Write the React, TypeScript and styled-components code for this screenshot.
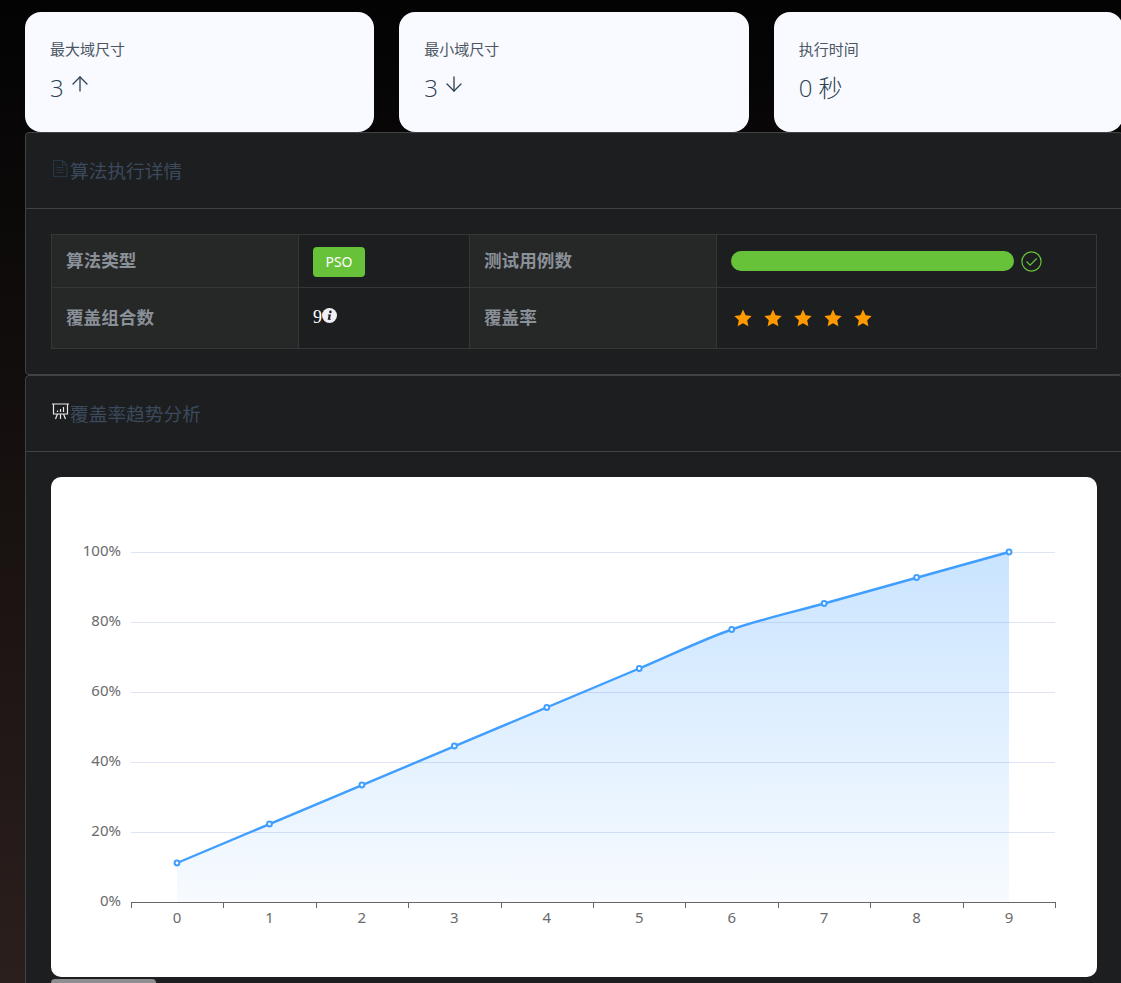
import React from "react";
import styled, { createGlobalStyle } from "styled-components";
import { ArrowUp, ArrowDown } from "lucide-react";

const FONT = `"Noto Sans", "Open Sans", "Noto Sans CJK SC", sans-serif`;

const Global = createGlobalStyle`
  html, body { margin: 0; padding: 0; height: 983px; overflow: hidden; }
  body {
    background: linear-gradient(180deg, #030303 0%, #2b1f1d 100%);
    font-family: ${FONT};
  }
`;

const Page = styled.div`
  width: 1098px;
  margin-left: 25px;
  padding-top: 12px;
`;

const StatRow = styled.div`
  display: grid;
  grid-template-columns: repeat(3, 1fr);
  gap: 25px;
`;

const StatCard = styled.div`
  height: 120px;
  box-sizing: border-box;
  background: #f8faff;
  border-radius: 16px;
  padding: 27px 25px 0;
`;

const StatLabel = styled.div`
  font-size: 15px;
  line-height: 20px;
  color: #4c5663;
`;

const StatValue = styled.div`
  display: flex;
  align-items: center;
  gap: 4px;
  margin-top: 13px;
  height: 32px;
  font-family: "Open Sans", "Noto Sans CJK SC", sans-serif;
  font-weight: 300;
  font-size: 24px;
  line-height: 32px;
  color: #2c3e50;
  svg { margin-top: -8px; }
`;

const Panel = styled.section`
  background: #1d1e20;
  border: 1px solid #414243;
  border-radius: 4px;
`;

const PanelHeader = styled.div`
  display: flex;
  align-items: center;
  box-sizing: border-box;
  height: 76px;
  padding: 0 25px 2px;
  border-bottom: 1px solid #414243;
  font-size: 18.72px;
  color: #3b4a5c;
`;

const PanelIcon = styled.svg`
  width: 19px;
  height: 19px;
  margin-top: -3px;
  flex: none;
`;

const PanelBody = styled.div`
  padding: 25px;
`;

const InfoTable = styled.div`
  display: grid;
  grid-template-columns: 247px 171px 247px 1fr;
  grid-template-rows: 53px 61px;
  border-top: 1px solid #363637;
  border-left: 1px solid #363637;
`;

const LabelCell = styled.div`
  display: flex;
  align-items: center;
  padding: 0 14px 3px;
  background: #262727;
  border-right: 1px solid #363637;
  border-bottom: 1px solid #363637;
  font-size: 17.6px;
  font-weight: 700;
  color: #8a9098;
`;

const ValueCell = styled.div`
  display: flex;
  align-items: center;
  padding: 0 14px;
  border-right: 1px solid #363637;
  border-bottom: 1px solid #363637;
  color: #fff;
  font-size: 16px;
`;

const Tag = styled.span`
  display: inline-flex;
  align-items: center;
  justify-content: center;
  width: 52px;
  height: 30px;
  margin-top: 1px;
  border-radius: 4px;
  background: #67c23a;
  color: #fff;
  font-size: 14px;
`;

const ProgressWrap = styled.div`
  display: flex;
  align-items: center;
  gap: 7px;
  width: 100%;
`;

const ProgressBar = styled.div`
  width: 283px;
  height: 20px;
  border-radius: 10px;
  background: #67c23a;
`;

const CountWrap = styled.span`
  display: inline-flex;
  align-items: center;
  margin-top: -2px;
  font-family: "Liberation Serif", serif;
  font-size: 18px;
`;

const Stars = styled.div`
  display: flex;
  gap: 10px;
  padding-left: 2px;
  margin-top: -1px;
`;

const ChartCard = styled.div`
  background: #fff;
  border-radius: 10px;
  height: 500px;
  overflow: hidden;
`;

const ScrollThumb = styled.div`
  width: 105px;
  height: 10px;
  margin-top: 2px;
  border-radius: 4px 4px 0 0;
  background: #8d8d92;
`;

const pts = [863, 824, 785, 746, 707.5, 668.5, 629.5, 603.5, 577.5, 552];
const X0 = 177 - 51;
const DX = 92.45;
const Y = (v: number) => v - 477;
const px = (i: number) => X0 + DX * i;
const linePath =
  `M${px(0)} ${Y(pts[0])}` +
  ` L${px(5)} ${Y(pts[5])}` +
  ` C${px(5) + 30} ${Y(pts[5]) - 12.6} ${px(6) - 30} ${Y(pts[6]) + 10.5} ${px(6)} ${Y(pts[6])}` +
  ` C${px(6) + 30} ${Y(pts[6]) - 10.5} ${px(7) - 30} ${Y(pts[7]) + 8.4} ${px(7)} ${Y(pts[7])}` +
  ` L${px(9)} ${Y(pts[9])}`;

const Star = () => (
  <svg width="20" height="20" viewBox="0 0 20 20">
    <path fill="#ff9900" d="M10 1.6l2.6 5.6 6.1.8-4.5 4.2 1.2 6.1L10 15.3l-5.4 3 1.2-6.1L1.3 8l6.1-.8z" />
  </svg>
);

const Chart = () => {
  const grid = [0, 20, 40, 60, 80, 100];
  return (
    <svg width="1046" height="500" viewBox="0 0 1046 500" style={{ display: "block" }}>
      <defs>
        <linearGradient id="area" x1="0" y1="0" x2="0" y2="1">
          <stop offset="0" stopColor="#409eff" stopOpacity="0.28" />
          <stop offset="1" stopColor="#409eff" stopOpacity="0.04" />
        </linearGradient>
      </defs>
      {grid.slice(1).map((g) => {
        const y = Math.round(Y(902 - g * 3.5)) + 0.5;
        return <line key={g} x1="80" x2="1004" y1={y} y2={y} stroke="#dfe3f6" strokeWidth="1" />;
      })}
      <path d={`${linePath} L${px(9)} ${Y(902)} L${px(0)} ${Y(902)} Z`} fill="url(#area)" />
      <line x1="80" x2="1004" y1="425.5" y2="425.5" stroke="#666" />
      {Array.from({ length: 11 }).map((_, i) => {
        const x = Math.round(80 + i * 92.4) + 0.5;
        return <line key={i} x1={x} x2={x} y1="425" y2="431" stroke="#666" />;
      })}
      <path d={linePath} fill="none" stroke="#409eff" strokeWidth="2.4" />
      {pts.map((p, i) => (
        <circle key={i} cx={px(i)} cy={Y(p)} r="2.4" fill="#fff" stroke="#409eff" strokeWidth="2" />
      ))}
      {grid.map((g) => (
        <text key={g} x="70" y={Y(902 - g * 3.5) + 4} textAnchor="end" fontSize="15" fill="#6a6a6a" fontFamily={FONT}>
          {g}%
        </text>
      ))}
      {pts.map((_, i) => (
        <text key={i} x={px(i)} y="446" textAnchor="middle" fontSize="15" fill="#6a6a6a" fontFamily={FONT}>
          {i}
        </text>
      ))}
    </svg>
  );
};

export default function App() {
  return (
    <>
      <Global />
      <Page>
        <StatRow>
          <StatCard>
            <StatLabel>最大域尺寸</StatLabel>
            <StatValue>3 <ArrowUp size={24} strokeWidth={1.3} /></StatValue>
          </StatCard>
          <StatCard>
            <StatLabel>最小域尺寸</StatLabel>
            <StatValue>3 <ArrowDown size={24} strokeWidth={1.3} /></StatValue>
          </StatCard>
          <StatCard>
            <StatLabel>执行时间</StatLabel>
            <StatValue>0 秒</StatValue>
          </StatCard>
        </StatRow>
        <Panel>
          <PanelHeader>
            <PanelIcon viewBox="0 0 19 19" fill="none" stroke="#263445" strokeWidth="1.2">
              <path d="M2.5 1.5h9l4.5 4.5v11.5H2.5z" />
              <path d="M11.5 1.5V6H16M5.5 8.5h7M5.5 11h7M5.5 13.5h7" />
            </PanelIcon>
            算法执行详情
          </PanelHeader>
          <PanelBody>
            <InfoTable>
              <LabelCell>算法类型</LabelCell>
              <ValueCell><Tag>PSO</Tag></ValueCell>
              <LabelCell>测试用例数</LabelCell>
              <ValueCell>
                <ProgressWrap>
                  <ProgressBar />
                  <svg width="21" height="21" viewBox="0 0 21 21" fill="none" stroke="#67c23a" strokeWidth="1.2">
                    <circle cx="10.5" cy="10.5" r="9.6" />
                    <path d="M5.5 10.5l3.6 3.6 6.6-6.6" />
                  </svg>
                </ProgressWrap>
              </ValueCell>
              <LabelCell>覆盖组合数</LabelCell>
              <ValueCell>
                <CountWrap>
                  9
                  <svg width="15" height="15" viewBox="0 0 15 15" style={{ marginTop: -4 }}>
                    <circle cx="7.5" cy="7.5" r="7.5" fill="#eef0f3" />
                    <circle cx="8.4" cy="3.9" r="1.3" fill="#1d1e20" />
                    <path d="M6 6.4h3l-1.1 4.4h1.1l-.3 1H5.6l1.1-4.4H5.8z" fill="#1d1e20" />
                  </svg>
                </CountWrap>
              </ValueCell>
              <LabelCell>覆盖率</LabelCell>
              <ValueCell>
                <Stars>
                  <Star /><Star /><Star /><Star /><Star />
                </Stars>
              </ValueCell>
            </InfoTable>
          </PanelBody>
        </Panel>
        <Panel>
          <PanelHeader>
            <PanelIcon viewBox="0 0 19 19" fill="none" stroke="#e6e8ea" strokeWidth="1.2">
              <path d="M1 2h17M2.5 2v10h14V2M6.5 12L4.5 17M12.5 12l2 5M9.5 12v5" />
              <path d="M6.5 10V8.5M9.5 10V7M12.5 10V5" />
            </PanelIcon>
            覆盖率趋势分析
          </PanelHeader>
          <PanelBody>
            <ChartCard><Chart /></ChartCard>
            <ScrollThumb />
          </PanelBody>
        </Panel>
      </Page>
    </>
  );
}
